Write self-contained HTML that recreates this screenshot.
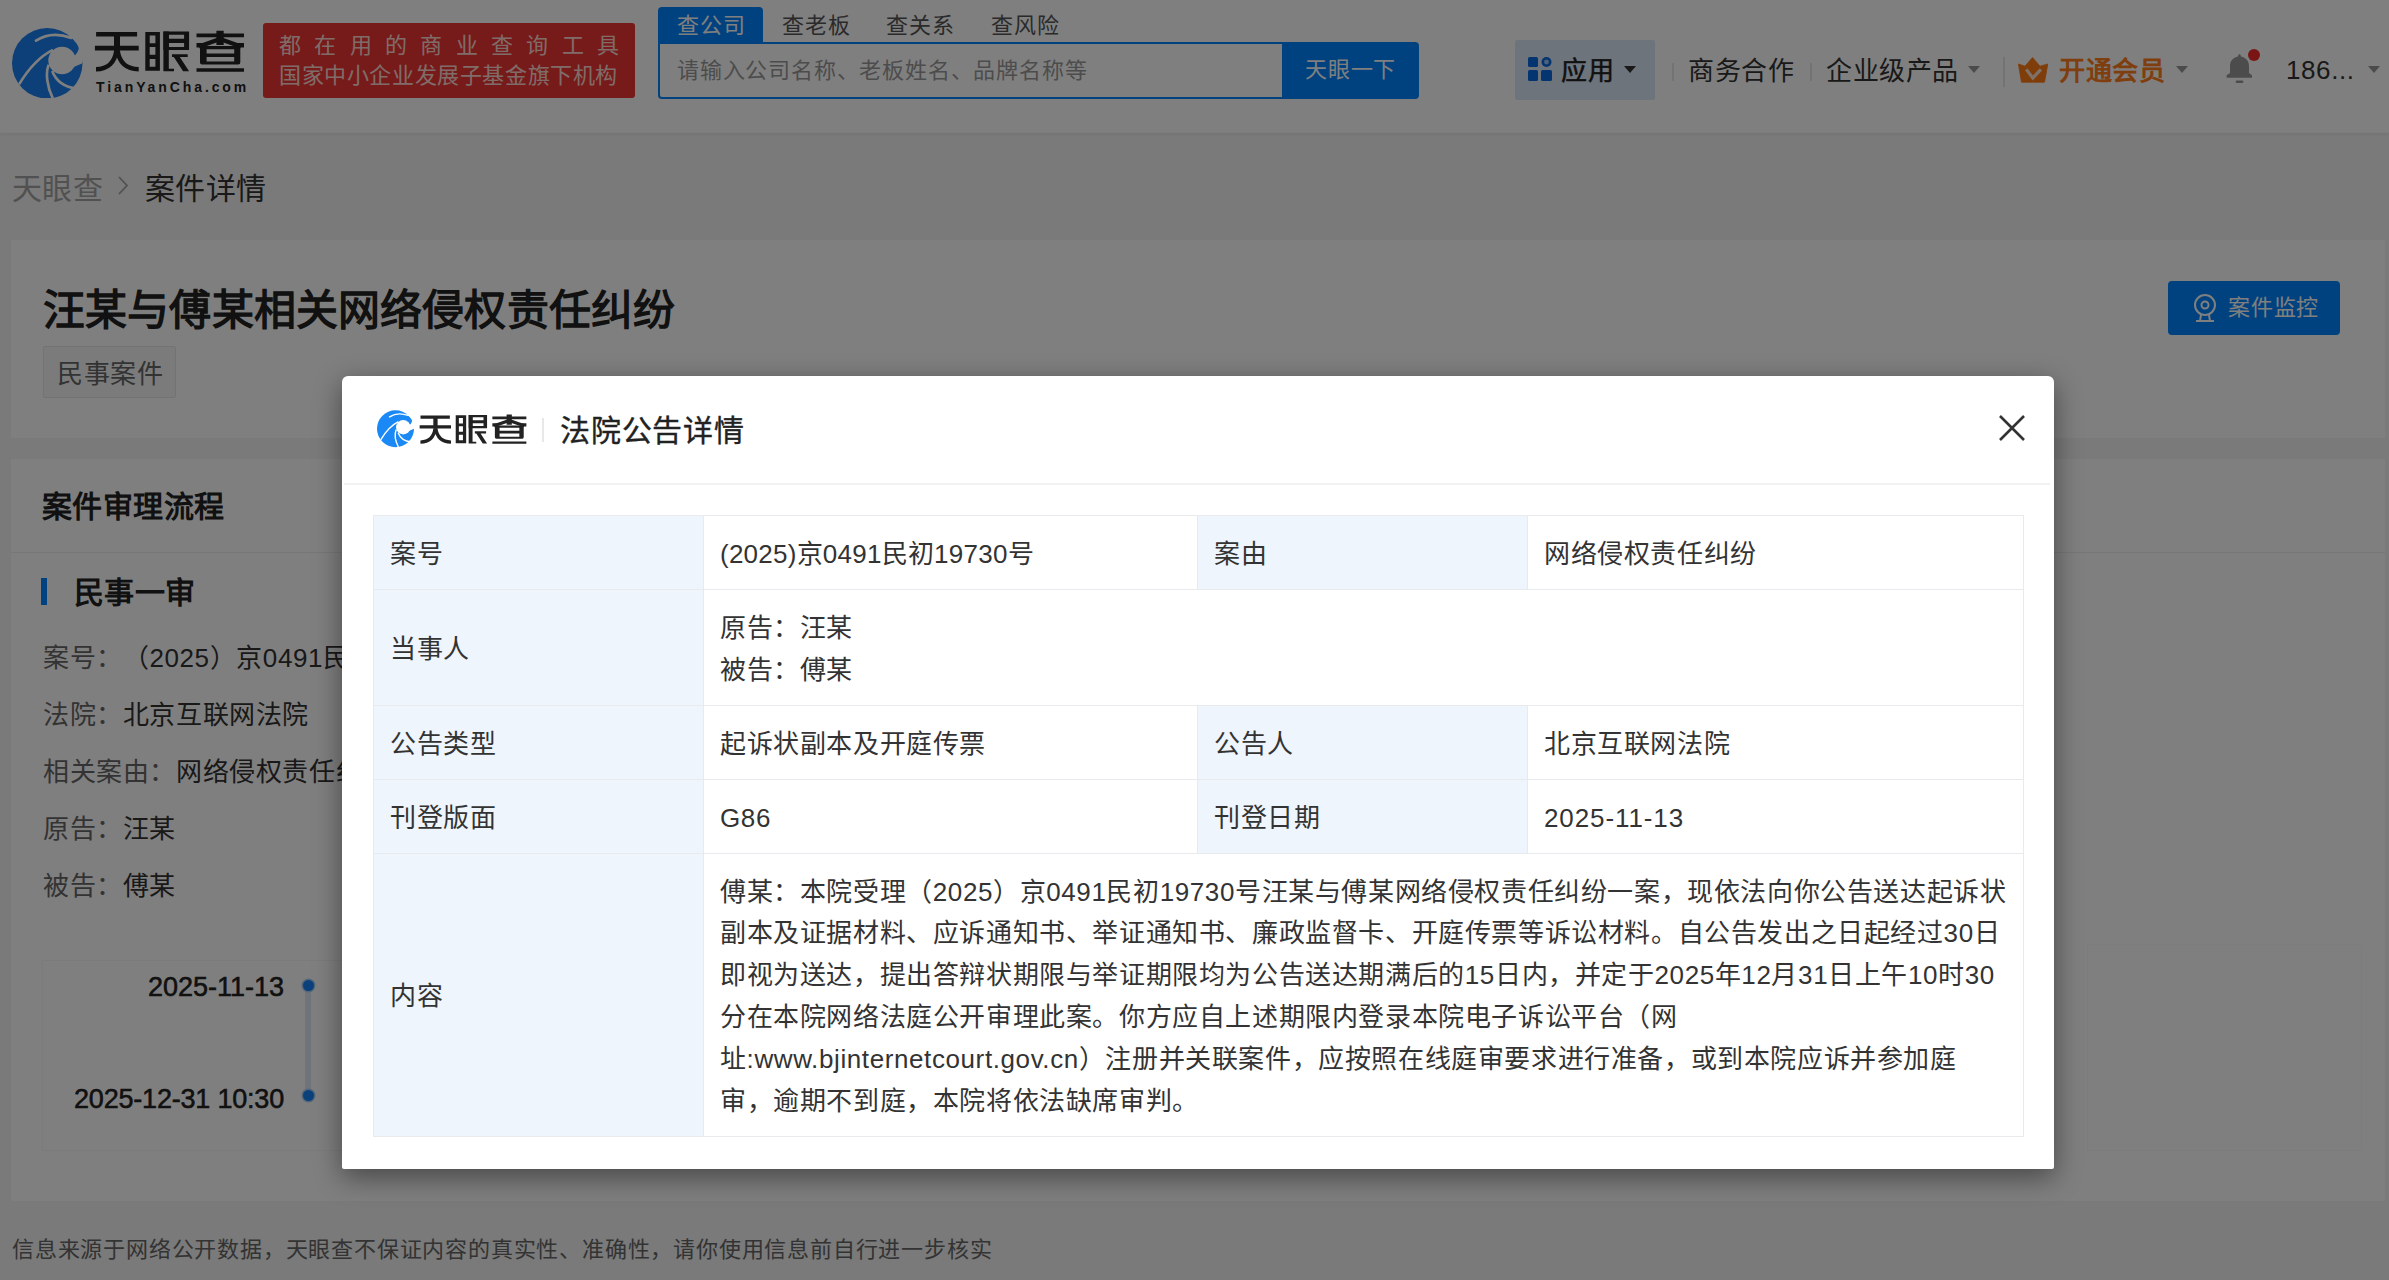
<!DOCTYPE html>
<html lang="zh-CN">
<head>
<meta charset="utf-8">
<style>
*{box-sizing:border-box;margin:0;padding:0}
html,body{width:2389px;height:1280px;overflow:hidden}
body{position:relative;background:#f4f4f4;font-family:"Liberation Sans",sans-serif;color:#333;text-spacing-trim:space-all}
.a{position:absolute;white-space:nowrap}
.t26{font-size:26px;line-height:26px;letter-spacing:.6px}
.t22{font-size:22px;line-height:22px;letter-spacing:.8px}
.t30{font-size:30px;line-height:30px;letter-spacing:.4px}
#hdr{position:absolute;left:0;top:0;width:2389px;height:133px;background:#fff;border-bottom:1px solid #fafafa;box-shadow:0 1px 4px rgba(0,0,0,.07)}
.card{position:absolute;left:11px;width:2374px;background:#fff}
.caret{position:absolute;width:0;height:0;border-left:6px solid transparent;border-right:6px solid transparent;border-top:7px solid #333}
.caret.g{border-top-color:#999}
.vdiv{position:absolute;width:2px;background:#e6e6e6}
#overlay{position:absolute;left:0;top:0;width:2389px;height:1280px;background:rgba(0,0,0,.5)}
#modal{position:absolute;left:342px;top:376px;width:1712px;height:793px;background:#fff;border-radius:6px 6px 2px 2px;box-shadow:0 8px 28px rgba(0,0,0,.45)}
table.d{position:absolute;left:31px;top:139px;width:1650px;border-collapse:collapse;table-layout:fixed;font-size:26px;line-height:41.9px;color:#333;letter-spacing:.6px}
table.d td{border:1px solid #e8eaee;padding:18px 16px 13px;vertical-align:middle;white-space:nowrap}
table.d td.l{background:#eef5fd}
</style>
</head>
<body>
<!-- ============ PAGE ============ -->
<div id="hdr">
  <!-- logo circle -->
  <svg class="a" style="left:12px;top:27.5px" width="70.5" height="70.5" viewBox="0 0 100 100">
    <circle cx="50" cy="50" r="50" fill="#1a7ef0"/>
    <circle cx="71" cy="46" r="19.5" fill="#fff"/>
    <path d="M82 13.5 C94 18, 99 27, 91 37 L88 40 L86 56 L100 50 L100 0 L82 0 Z" fill="#fff"/>
    <g stroke="#fff" stroke-width="3.8" fill="none">
      <path d="M34 18 C46 10, 64 7, 84 14" stroke-linecap="round"/>
      <path d="M10 80 C22 60, 36 42, 58 31"/>
      <path d="M52 52 C47 64, 50 84, 58 100"/>
      <path d="M57 61 C62 74, 74 84, 92 86"/>
    </g>
  </svg>
  <!-- logotype -->
  <svg class="a" style="left:94px;top:30px" width="152" height="43" viewBox="0 0 152 43" fill="#222">
    <path d="M2.1 2.1h41v4.5h-41z M20 2.1h6v18.3h-6z M0.9 15.7h43.8v4.7H0.9z"/>
    <path fill-rule="evenodd" d="M51.3 1.9h14.6v38.8H51.3z M55.7 5.6h5.7v7.7h-5.7z M55.7 17.1h5.7v7.6h-5.7z M55.7 29.1h5.7v7.7h-5.7z"/>
    <path fill-rule="evenodd" d="M69.4 1.5h25.7v18.5H69.4z M74.8 4.7h15.3v4.1H74.8z M74.8 12.9h15.3v4H74.8z"/>
    <path d="M69.4 1.5h5.4v39.8h-5.4z M69.4 38.7h10.6v2.6H69.4z M78 24.2h15.7v2.9H78z M78 24.2 L84 24.2 L95.1 41.3 L89.1 41.3 Z"/>
    <path d="M102.5 3.5h47.5v3.7h-47.5z M122.4 0.7h7.3v14.2h-7.3z M102.5 12.9h8v4.6h-8z M142 12.9h8v4.6h-8z M102.5 38.3h47.5v3.4h-47.5z"/>
    <path fill-rule="evenodd" d="M108 16.1h36.3a2 2 0 0 1 2 2v14.5a2 2 0 0 1 -2 2h-36.3a2 2 0 0 1 -2 -2v-14.5a2 2 0 0 1 2 -2z M112.6 19.2h27.6v4.2h-27.6z M112.6 27.1h27.6v4.5h-27.6z"/>
    <path d="M126 9 L105 16.5 M126 9 L147 16.5" stroke="#222" stroke-width="4.4" fill="none"/>
    <path d="M2 39.2 C14 39.2, 21 32, 22.5 20 M44.7 39.2 C32 39.2, 25 32, 23.5 20" stroke="#222" stroke-width="4.6" fill="none"/>
  </svg>
  <div class="a" style="left:96px;top:80px;font-size:14px;line-height:14px;font-weight:bold;color:#222;letter-spacing:2.9px">TianYanCha.com</div>
  <!-- red banner -->
  <div class="a" style="left:263px;top:23px;width:372px;height:75px;background:#ef3535;border-radius:3px"></div>
  <div class="a" style="left:279px;top:34px;width:340px;font-size:22px;line-height:23px;color:#ffd9d2;display:flex;justify-content:space-between"><span>都</span><span>在</span><span>用</span><span>的</span><span>商</span><span>业</span><span>查</span><span>询</span><span>工</span><span>具</span></div>
  <div class="a" style="left:279px;top:64px;font-size:22px;line-height:23px;color:#ffd9d2;letter-spacing:.6px">国家中小企业发展子基金旗下机构</div>
  <!-- tabs -->
  <div class="a" style="left:658px;top:7px;width:105px;height:37px;background:#0084ff;border-radius:4px 4px 0 0"></div>
  <div class="a t22" style="left:677px;top:14.5px;color:#fff">查公司</div>
  <div class="a t22" style="left:782px;top:14.5px;color:#555">查老板</div>
  <div class="a t22" style="left:886px;top:14.5px;color:#555">查关系</div>
  <div class="a t22" style="left:991px;top:14.5px;color:#555">查风险</div>
  <!-- search -->
  <div class="a" style="left:658px;top:42px;width:630px;height:57px;border:2px solid #0084ff;border-radius:0 0 0 4px;background:#fff"></div>
  <div class="a t22" style="left:677px;top:60px;color:#999">请输入公司名称、老板姓名、品牌名称等</div>
  <div class="a" style="left:1282px;top:42px;width:137px;height:57px;background:#0084ff;border-radius:0 4px 4px 0"></div>
  <div class="a t22" style="left:1305px;top:59px;color:#fff">天眼一下</div>
  <!-- right nav -->
  <div class="a" style="left:1515px;top:40px;width:140px;height:60px;background:#dbe8f8;border-radius:2px"></div>
  <svg class="a" style="left:1528px;top:57px" width="24" height="24" viewBox="0 0 24 24">
    <rect x="0" y="0" width="10" height="10" rx="1.5" fill="#0a6be0"/>
    <circle cx="18.5" cy="5" r="5" fill="#0a6be0"/><circle cx="18.5" cy="5" r="2.4" fill="#9cc6f5"/>
    <rect x="0" y="13" width="10" height="11" rx="1.5" fill="#0a6be0"/>
    <rect x="13" y="13" width="11" height="11" rx="1.5" fill="#0a6be0"/>
  </svg>
  <div class="a t26" style="left:1561px;top:58px;color:#222;-webkit-text-stroke:0.5px #222">应用</div>
  <div class="caret" style="left:1624px;top:66px"></div>
  <div class="vdiv" style="left:1672px;top:63px;height:18px"></div>
  <div class="a t26" style="left:1688px;top:58px;color:#333">商务合作</div>
  <div class="vdiv" style="left:1810px;top:63px;height:18px"></div>
  <div class="a t26" style="left:1826px;top:58px;color:#333">企业级产品</div>
  <div class="caret g" style="left:1968px;top:66px"></div>
  <div class="vdiv" style="left:2003px;top:57px;height:30px"></div>
  <svg class="a" style="left:2018px;top:57px" width="30" height="26" viewBox="0 0 30 26">
    <path d="M0.4 7 L7 9.2 L14.5 0.5 L22 9.2 L29.8 7 L26.5 25.2 L3.5 25.2 Z" fill="#ff7a12" stroke="#ff7a12" stroke-width="0.8" stroke-linejoin="round"/>
    <path d="M8.3 12.4 L14.8 21.1 L22.9 12.4" stroke="#ffe3d0" stroke-width="3.2" fill="none"/>
  </svg>
  <div class="a t26" style="left:2059px;top:58px;color:#ff7d1c;font-weight:bold">开通会员</div>
  <div class="caret g" style="left:2176px;top:66px"></div>
  <svg class="a" style="left:2225px;top:53px" width="28" height="32" viewBox="0 0 28 32">
    <path d="M14.5 1 C15.6 1.6, 16 2.6, 16 3.5 C21 4.5, 24 8, 24 13 L24 20 L27 22.2 L27 24.8 L1.6 24.8 L1.6 22.2 L5 20 L5 13 C5 8, 8 4.5, 13 3.5 C13 2.6, 13.4 1.6, 14.5 1 Z" fill="#999"/>
    <rect x="10.6" y="27.4" width="7.8" height="2.6" rx="1.3" fill="#999"/>
  </svg>
  <div class="a" style="left:2248px;top:48.6px;width:12px;height:12px;border-radius:50%;background:#f52a2a"></div>
  <div class="a t26" style="left:2286px;top:57px;color:#333">186...</div>
  <div class="caret g" style="left:2368px;top:66px"></div>
</div>

<!-- breadcrumb -->
<div class="a t30" style="left:12px;top:174px;color:#a3a3a3">天眼查</div>
<svg class="a" style="left:116px;top:175px" width="14" height="22" viewBox="0 0 14 22"><path d="M3 2 L11 10.5 L3 19" stroke="#a3a3a3" stroke-width="1.8" fill="none"/></svg>
<div class="a t30" style="left:145px;top:173.5px;color:#333">案件详情</div>

<!-- card 1 -->
<div class="card" style="top:240px;height:198px"></div>
<div class="a" style="left:43px;top:289.5px;font-size:42px;line-height:42px;font-weight:bold;color:#222;letter-spacing:.15px">汪某与傅某相关网络侵权责任纠纷</div>
<div class="a" style="left:43px;top:346px;width:133px;height:52px;background:#f6f6f6;border:1px solid #e6e6e6;border-radius:2px"></div>
<div class="a t26" style="left:57px;top:361px;color:#666">民事案件</div>
<div class="a" style="left:2168px;top:281px;width:172px;height:54px;background:#0084ff;border-radius:4px"></div>
<svg class="a" style="left:2192px;top:293px" width="26" height="30" viewBox="0 0 26 30" fill="none" stroke="#fff" stroke-width="2">
  <circle cx="13" cy="12" r="10"/><circle cx="13" cy="12" r="3.5"/><path d="M9 22 L8 28 M17 22 L18 28 M4 28 H22"/>
</svg>
<div class="a" style="left:2228px;top:296px;font-size:22px;line-height:24px;color:#fff;letter-spacing:.8px">案件监控</div>

<!-- card 2 -->
<div class="card" style="top:459px;height:742px"></div>
<div class="a t30" style="left:42px;top:492px;font-weight:bold;color:#222">案件审理流程</div>
<div class="a" style="left:11px;top:552px;width:2374px;height:1px;background:#eee"></div>
<div class="a" style="left:41px;top:578px;width:6px;height:27px;background:#0084ff"></div>
<div class="a t30" style="left:74px;top:577.5px;font-weight:bold;color:#222">民事一审</div>
<div class="a t26" style="left:43px;top:644.5px"><span style="color:#666">案号：</span><span style="color:#333">（2025）京0491民初19730号</span></div>
<div class="a t26" style="left:43px;top:701.5px"><span style="color:#666">法院：</span><span style="color:#333">北京互联网法院</span></div>
<div class="a t26" style="left:43px;top:758.5px"><span style="color:#666">相关案由：</span><span style="color:#333">网络侵权责任纠纷</span></div>
<div class="a t26" style="left:43px;top:815.5px"><span style="color:#666">原告：</span><span style="color:#333">汪某</span></div>
<div class="a t26" style="left:43px;top:872.5px"><span style="color:#666">被告：</span><span style="color:#333">傅某</span></div>
<div class="a" style="left:42px;top:960px;width:400px;height:191px;border:1px solid #f6f6f6"></div>
<div class="a" style="left:2087px;top:944px;width:275px;height:207px;border:1px solid #f9f9f9"></div>
<div class="a" style="left:0;top:974px;width:284px;text-align:right;font-size:27px;line-height:27px;color:#222;-webkit-text-stroke:0.55px #222;letter-spacing:0px">2025-11-13</div>
<div class="a" style="left:0;top:1086px;width:284px;text-align:right;font-size:27px;line-height:27px;color:#222;-webkit-text-stroke:0.55px #222;letter-spacing:-0.2px">2025-12-31 10:30</div>
<div class="a" style="left:305px;top:985px;width:6px;height:110px;background:#dfe9f5"></div>
<div class="a" style="left:302.5px;top:979.5px;width:11px;height:11px;border-radius:50%;background:#1482f5;box-shadow:0 0 0 1.5px #a8cdf2"></div>
<div class="a" style="left:302.5px;top:1089.5px;width:11px;height:11px;border-radius:50%;background:#1482f5;box-shadow:0 0 0 1.5px #a8cdf2"></div>

<!-- footer -->
<div class="a" style="left:12px;top:1238.2px;font-size:22px;line-height:23px;color:#666;letter-spacing:.8px">信息来源于网络公开数据，天眼查不保证内容的真实性、准确性，请你使用信息前自行进一步核实</div>

<!-- ============ OVERLAY ============ -->
<div id="overlay"></div>

<!-- ============ MODAL ============ -->
<div id="modal">
  <svg class="a" style="left:34.5px;top:34px" width="37" height="37.5" viewBox="0 0 100 100">
    <circle cx="50" cy="50" r="50" fill="#1a88f5"/>
    <circle cx="71" cy="46" r="19.5" fill="#fff"/>
    <path d="M82 13.5 C94 18, 99 27, 91 37 L88 40 L86 56 L100 50 L100 0 L82 0 Z" fill="#fff"/>
    <g stroke="#fff" stroke-width="3.8" fill="none">
      <path d="M34 18 C46 10, 64 7, 84 14" stroke-linecap="round"/>
      <path d="M10 80 C22 60, 36 42, 58 31"/>
      <path d="M52 52 C47 64, 50 84, 58 100"/>
      <path d="M57 61 C62 74, 74 84, 92 86"/>
    </g>
  </svg>
  <svg class="a" style="left:76.6px;top:38.2px" width="108.8" height="30.8" viewBox="0 0 152 43" fill="#222">
    <path d="M2.1 2.1h41v4.5h-41z M20 2.1h6v18.3h-6z M0.9 15.7h43.8v4.7H0.9z"/>
    <path fill-rule="evenodd" d="M51.3 1.9h14.6v38.8H51.3z M55.7 5.6h5.7v7.7h-5.7z M55.7 17.1h5.7v7.6h-5.7z M55.7 29.1h5.7v7.7h-5.7z"/>
    <path fill-rule="evenodd" d="M69.4 1.5h25.7v18.5H69.4z M74.8 4.7h15.3v4.1H74.8z M74.8 12.9h15.3v4H74.8z"/>
    <path d="M69.4 1.5h5.4v39.8h-5.4z M69.4 38.7h10.6v2.6H69.4z M78 24.2h15.7v2.9H78z M78 24.2 L84 24.2 L95.1 41.3 L89.1 41.3 Z"/>
    <path d="M102.5 3.5h47.5v3.7h-47.5z M122.4 0.7h7.3v14.2h-7.3z M102.5 12.9h8v4.6h-8z M142 12.9h8v4.6h-8z M102.5 38.3h47.5v3.4h-47.5z"/>
    <path fill-rule="evenodd" d="M108 16.1h36.3a2 2 0 0 1 2 2v14.5a2 2 0 0 1 -2 2h-36.3a2 2 0 0 1 -2 -2v-14.5a2 2 0 0 1 2 -2z M112.6 19.2h27.6v4.2h-27.6z M112.6 27.1h27.6v4.5h-27.6z"/>
    <path d="M126 9 L105 16.5 M126 9 L147 16.5" stroke="#222" stroke-width="4.4" fill="none"/>
    <path d="M2 39.2 C14 39.2, 21 32, 22.5 20 M44.7 39.2 C32 39.2, 25 32, 23.5 20" stroke="#222" stroke-width="4.6" fill="none"/>
  </svg>
  <div class="a" style="left:200px;top:42px;width:2px;height:24px;background:#e8e8e8"></div>
  <div class="a" style="left:218px;top:40px;font-size:30px;line-height:30px;color:#222;-webkit-text-stroke:0.35px #222;letter-spacing:.8px">法院公告详情</div>
  <svg class="a" style="left:1656px;top:38px" width="28" height="28" viewBox="0 0 28 28"><path d="M2 2 L26 26 M26 2 L2 26" stroke="#333" stroke-width="2.6"/></svg>
  <div class="a" style="left:2px;top:107px;width:1706px;height:2px;background:#f2f2f2"></div>
  <table class="d">
    <colgroup><col style="width:330px"><col style="width:494px"><col style="width:330px"><col style="width:496px"></colgroup>
    <tr><td class="l">案号</td><td style="letter-spacing:.24px">(2025)京0491民初19730号</td><td class="l">案由</td><td>网络侵权责任纠纷</td></tr>
    <tr><td class="l">当事人</td><td colspan="3">原告：汪某<br>被告：傅某</td></tr>
    <tr><td class="l">公告类型</td><td>起诉状副本及开庭传票</td><td class="l">公告人</td><td>北京互联网法院</td></tr>
    <tr><td class="l">刊登版面</td><td>G86</td><td class="l">刊登日期</td><td style="letter-spacing:.9px">2025-11-13</td></tr>
    <tr><td class="l">内容</td><td colspan="3"><span class="ln">傅某：本院受理（2025）京0491民初19730号汪某与傅某网络侵权责任纠纷一案，现依法向你公告送达起诉状</span><br><span class="ln">副本及证据材料、应诉通知书、举证通知书、廉政监督卡、开庭传票等诉讼材料。自公告发出之日起经过30日</span><br><span class="ln">即视为送达，提出答辩状期限与举证期限均为公告送达期满后的15日内，并定于2025年12月31日上午10时30</span><br><span class="ln">分在本院网络法庭公开审理此案。你方应自上述期限内登录本院电子诉讼平台（网</span><br><span class="ln">址:www.bjinternetcourt.gov.cn）注册并关联案件，应按照在线庭审要求进行准备，或到本院应诉并参加庭</span><br><span class="ln">审，逾期不到庭，本院将依法缺席审判。</span></td></tr>
  </table>
</div>
</body>
</html>
